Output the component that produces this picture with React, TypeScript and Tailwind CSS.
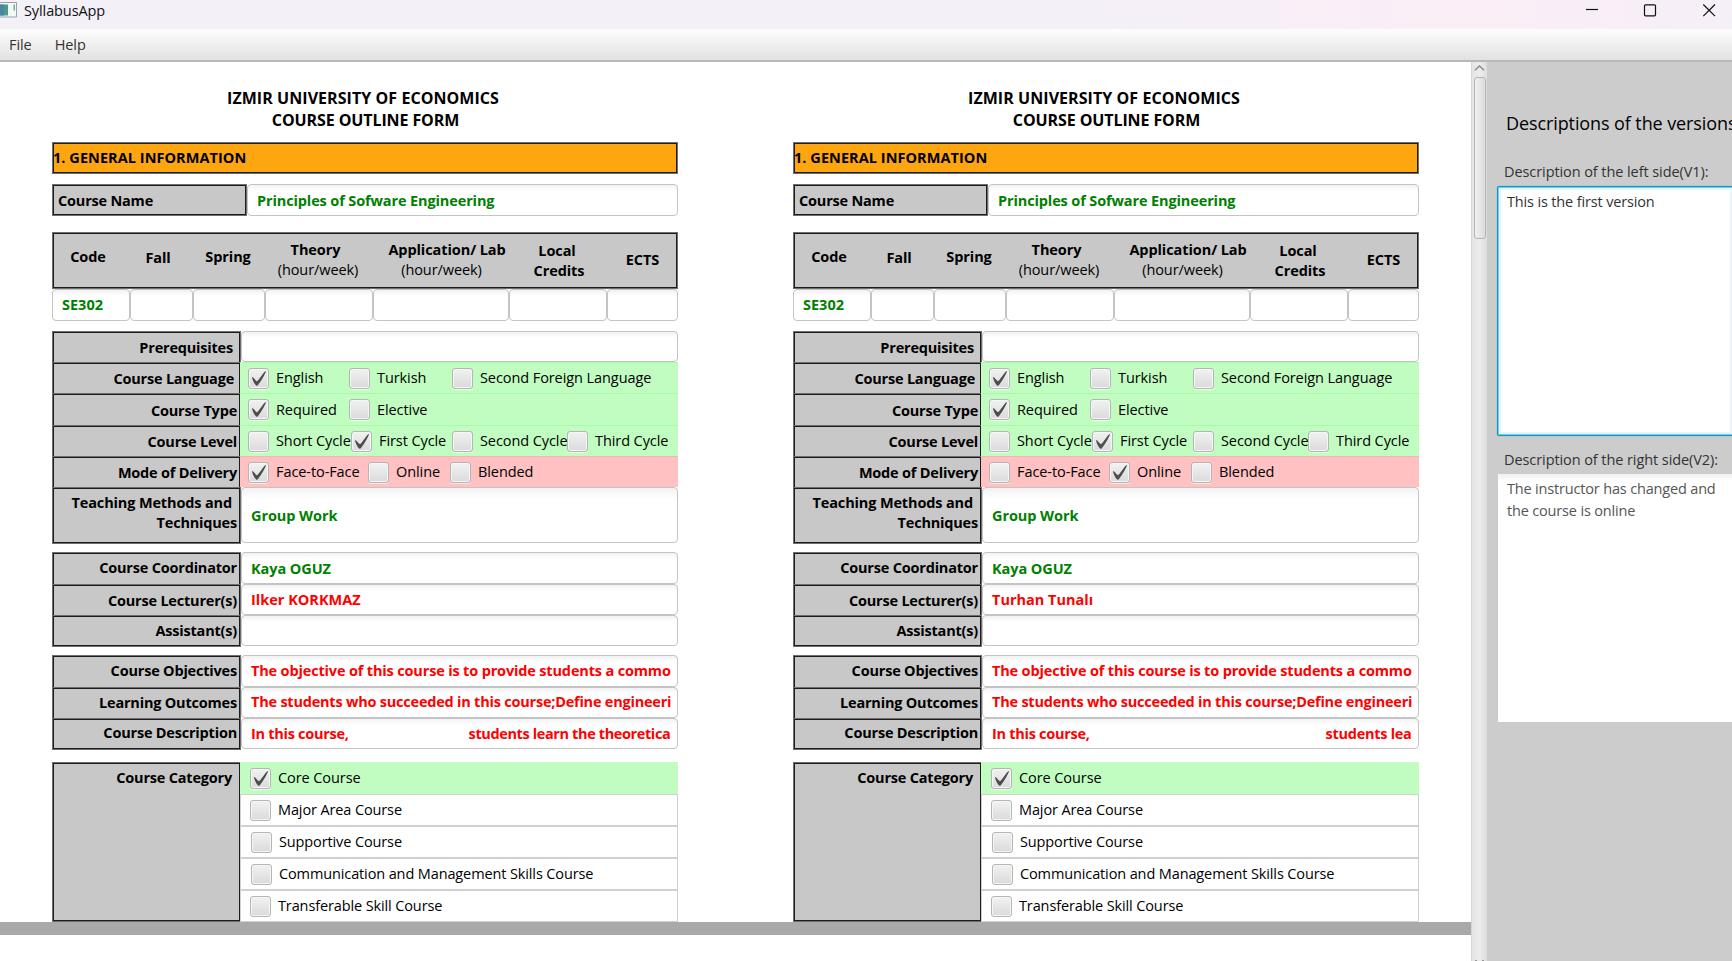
import type { ReactNode } from "react";

type Option = { label: string; checked?: boolean; width: string };

function CheckBox({ checked }: { checked?: boolean }) {
  return (
    <span className="flex h-[21px] w-[21px] shrink-0 items-center justify-center rounded-[3px] border border-[#b5b5b5] bg-linear-to-b from-[#f2f2f2] to-[#dadada] shadow-[inset_0_0_0_1px_#f6f6f6,0_1px_0_rgba(255,255,255,0.6)]">
      {checked && (
        <svg width="14" height="15" viewBox="-0.5 -1 16.6 17.3" preserveAspectRatio="none" fill="#4d4d4d">
          <path d="M-0.25,6.083c0.843-0.758,4.583,4.833,5.75,4.833S14.5-1.5,15.917-0.917c1.292,0.532-8.75,17.083-10.5,17.083C3,16.167-1.094,6.841-0.25,6.083z" />
        </svg>
      )}
    </span>
  );
}

function Check({ option }: { option: Option }) {
  return (
    <div className={`flex shrink-0 items-center gap-[7px] whitespace-nowrap ${option.width}`}>
      <CheckBox checked={option.checked} />
      <span>{option.label}</span>
    </div>
  );
}

const EDGE = "border border-[#6e6e6e] shadow-[inset_0_0_0_1px_#1c1c1c]";

function Label({ children, pad = "pr-[3px]" }: { children: ReactNode; pad?: string }) {
  return (
    <div className={`-mb-[2px] flex w-[189px] shrink-0 items-center justify-end bg-[#c8c8c8] text-right font-bold tracking-[-0.2px] group-last:-mb-px ${EDGE} ${pad}`}>
      <span>{children}</span>
    </div>
  );
}

function Field({ children, color, pad = "" }: { children?: ReactNode; color?: string; pad?: string }) {
  return (
    <div className={`flex flex-1 items-center overflow-hidden rounded-[4px] border border-[#c4c4c4] bg-linear-to-b from-[#f2f2f2] via-white via-20% to-white pl-[9px] font-bold ${pad} ${color ?? ""}`}>
      <span className="whitespace-pre">{children}</span>
    </div>
  );
}

function Row({ label, pad, height, children }: { label: ReactNode; pad?: string; height: string; children: ReactNode }) {
  return (
    <div className={`group flex ${height}`}>
      <Label pad={pad}>{label}</Label>
      {children}
    </div>
  );
}

function Options({ options, tone }: { options: Option[]; tone: string }) {
  return (
    <div className={`-ml-px flex flex-1 items-center border-t pl-2 ${tone}`}>
      {options.map((o) => (
        <Check key={o.label} option={o} />
      ))}
    </div>
  );
}

const GREEN = "border-[#a4fca4] bg-[#c1fdc1]";
const RED = "border-[#f4b4b4] bg-[#ffc1c1]";
const OK = "text-[#008000]";
const DIFF = "text-[#ff0000]";

type Syllabus = {
  lecturer: string;
  faceToFace: boolean;
  description: string;
  tail: string;
  gap: string;
};

const codeCells = ["w-[78px]", "w-[63px]", "w-[72px]", "w-[108px]", "w-[136px]", "w-[98px]", "w-[71px]"];

const categories = [
  { label: "Major Area Course", pad: "pl-[9px]" },
  { label: "Supportive Course", pad: "pl-[10px]" },
  { label: "Communication and Management Skills Course", pad: "pl-[10px]" },
  { label: "Transferable Skill Course", pad: "pl-[9px]" },
];

function HeadCell({ width, pad, top, sub, subPad = "" }: { width: string; pad: string; top: ReactNode; sub?: string; subPad?: string }) {
  return (
    <div className={`shrink-0 text-center font-bold leading-5 whitespace-nowrap ${width} ${pad}`}>
      {top}
      {sub && <div className={`font-normal ${subPad}`}>{sub}</div>}
    </div>
  );
}

function Outline({ data }: { data: Syllabus }) {
  return (
    <div className="w-[626px] shrink-0">
      <div className="h-20 pt-[25px] text-center text-base font-bold leading-[22px]">
        <div className="pr-[4px] tracking-[0.06px]">IZMIR UNIVERSITY OF ECONOMICS</div>
        <div className="pl-px tracking-[-0.1px]">COURSE OUTLINE FORM</div>
      </div>
      <div className={`flex h-8 items-center bg-[#fea60f] font-bold tracking-[0.05px] ${EDGE}`}>1. GENERAL INFORMATION</div>

      <div className="mt-[10px] flex h-8">
        <div className={`flex w-[195px] items-center bg-[#c8c8c8] pt-px pl-[5px] font-bold tracking-[-0.2px] ${EDGE}`}>Course Name</div>
        <Field color={OK} pad="pt-px tracking-[-0.12px]">Principles of Sofware Engineering</Field>
      </div>

      <div className={`mt-4 flex h-[57px] bg-[#c8c8c8] ${EDGE}`}>
        <HeadCell width="w-[70px]" pad="pt-[14px]" top="Code" />
        <HeadCell width="w-[70px]" pad="pt-[15px]" top="Fall" />
        <HeadCell width="w-[70px]" pad="pt-[14px]" top="Spring" />
        <HeadCell width="w-[107px]" pad="pt-[7px] pr-[2px]" top="Theory" sub="(hour/week)" subPad="pl-[5px]" />
        <HeadCell width="w-[143px]" pad="pt-[7px] pl-[11px]" top="Application/ Lab" sub="(hour/week)" subPad="pr-[11px]" />
        <HeadCell width="w-[91px]" pad="pt-[8px]" top={<><div className="pr-[3px]">Local</div><div className="pl-px">Credits</div></>} />
        <HeadCell width="w-[73px]" pad="pt-[17px] pl-[4px]" top="ECTS" />
      </div>
      <div className="flex h-8 bg-white">
        {codeCells.map((w, i) => (
          <div key={w} className={`flex shrink-0 ${w}`}>
            <Field color={OK} pad="tracking-normal">{i === 0 ? "SE302" : ""}</Field>
          </div>
        ))}
      </div>

      <div className="mt-[10px]">
        <Row label="Prerequisites" pad="pr-[7px]" height="h-[31px]">
          <Field />
        </Row>
        <Row label="Course Language" pad="pr-[6px]" height="h-[31px]">
          <Options
            tone={GREEN}
            options={[
              { label: "English", checked: true, width: "w-[101px]" },
              { label: "Turkish", width: "w-[103px]" },
              { label: "Second Foreign Language", width: "w-[200px]" },
            ]}
          />
        </Row>
        <Row label="Course Type" pad="pr-[3px] pt-px" height="h-8">
          <Options
            tone={GREEN}
            options={[
              { label: "Required", checked: true, width: "w-[101px]" },
              { label: "Elective", width: "w-[102px]" },
            ]}
          />
        </Row>
        <Row label="Course Level" height="h-[31px]">
          <Options
            tone={GREEN}
            options={[
              { label: "Short Cycle", width: "w-[103px]" },
              { label: "First Cycle", checked: true, width: "w-[101px]" },
              { label: "Second Cycle", width: "w-[115px]" },
              { label: "Third Cycle", width: "w-[104px]" },
            ]}
          />
        </Row>
        <Row label="Mode of Delivery" height="h-[31px]">
          <Options
            tone={RED}
            options={[
              { label: "Face-to-Face", checked: data.faceToFace, width: "w-[120px]" },
              { label: "Online", checked: !data.faceToFace, width: "w-[82px]" },
              { label: "Blended", width: "w-[100px]" },
            ]}
          />
        </Row>
        <Row
          height="h-[56px]"
          pad="pr-[3px] pb-[6px] leading-5"
          label={<><span className="block pr-[5px] tracking-[-0.14px]">Teaching Methods and</span>Techniques</>}
        >
          <Field color={OK} pad="pt-[2px]">Group Work</Field>
        </Row>
      </div>

      <div className="mt-[9px]">
        <Row label="Course Coordinator" pad="pr-[3px] pb-[2px]" height="h-8">
          <Field color={OK} pad="pt-px">Kaya OGUZ</Field>
        </Row>
        <Row label="Course Lecturer(s)" height="h-[31px]">
          <Field color={DIFF} pad="tracking-normal">{data.lecturer}</Field>
        </Row>
        <Row label="Assistant(s)" height="h-[31px]">
          <Field />
        </Row>
      </div>

      <div className="mt-[9px]">
        <Row label="Course Objectives" pad="pr-[3px] pb-[2px]" height="h-8">
          <Field color={DIFF} pad="tracking-[-0.16px]">The objective of this course is to provide students a commo</Field>
        </Row>
        <Row label="Learning Outcomes" pad="pr-[3px] pb-[2px]" height="h-[31px]">
          <Field color={DIFF} pad="pb-[2px] tracking-[-0.22px]">The students who succeeded in this course;Define engineeri</Field>
        </Row>
        <Row label="Course Description" pad="pr-[3px] pb-[2px]" height="h-[31px]">
          <Field color={DIFF} pad="tracking-[-0.28px]">
            {data.description}
            <span className={data.gap}>{data.tail}</span>
          </Field>
        </Row>
      </div>

      <div className="mt-[13px] flex h-40">
        <div className={`w-[189px] shrink-0 bg-[#c8c8c8] pt-1 pr-[8px] text-right font-bold tracking-[-0.2px] ${EDGE}`}>Course Category</div>
        <div className="-ml-px flex flex-1 flex-col">
          <div className="flex h-8 items-center bg-[#c1fdc1] pl-[10px]">
            <Check option={{ label: "Core Course", checked: true, width: "w-[200px]" }} />
          </div>
          {categories.map((c) => (
            <div key={c.label} className={`flex h-8 items-center border border-[#d0d0d0] bg-white tracking-[-0.12px] ${c.pad}`}>
              <Check option={{ label: c.label, width: "w-[380px]" }} />
            </div>
          ))}
        </div>
      </div>
    </div>
  );
}

function TitleBar() {
  return (
    <div className="flex h-[29px] shrink-0 bg-linear-to-r from-[#f3f0f8] from-60% via-[#fbeef7] via-85% to-[#f5eff8]">
      <svg className="mt-[2px]" width="17" height="16" viewBox="0 0 17 16">
        <path d="M-2 0.5 H16.5 V15 H-2 Z" fill="#f4f7f8" stroke="#9aa0a8" />
        <rect x="0" y="2.5" width="8" height="11" fill="#4a9a8c" />
        <rect x="0" y="2.5" width="4" height="11" fill="#4d86a0" />
        <rect x="13.5" y="2.5" width="1.5" height="6" fill="#6cb48c" />
      </svg>
      <div className="ml-[7px] text-[14.5px] leading-[22px] tracking-[-0.1px] text-[#111]">SyllabusApp</div>
      <svg className="mt-1 mr-[16px] ml-auto" width="130" height="14" viewBox="0 0 130 14" fill="none" stroke="#111" strokeWidth="1.2">
        <path d="M0 5.5 H12" />
        <rect x="58.5" y="0.8" width="11" height="11" rx="1" />
        <path d="M117.3 0.5 L129 12.2 M129 0.5 L117.3 12.2" />
      </svg>
    </div>
  );
}

export default function App() {
  return (
    <div className="flex h-[961px] w-[1732px] flex-col overflow-hidden bg-white font-['Open_Sans','Noto_Sans',sans-serif] text-[14.5px] tracking-[-0.08px] text-black">
      <TitleBar />
      <div className="flex h-[33px] shrink-0 items-center gap-[23px] border-b-2 border-[#b8b8b8] bg-linear-to-b from-[#fdfdfd] to-[#e2e2e2] pl-[9px] text-[#333]">
        <span>File</span>
        <span>Help</span>
      </div>
      <div className="flex min-h-0 flex-1">
        <div className="w-[1471px] shrink-0">
          <div className="flex h-[860px] gap-[115px] pl-[52px]">
            <Outline data={{ lecturer: "Ilker KORKMAZ", faceToFace: true, description: "In this course,", tail: "students learn the theoretica", gap: "ml-[120px] tracking-[-0.38px]" }} />
            <Outline data={{ lecturer: "Turhan Tunalı", faceToFace: false, description: "In this course,", tail: "students lea", gap: "ml-[236px]" }} />
          </div>
          <div className="h-[13px] bg-[#a9a9a9]" />
        </div>
        <div className="flex w-4 shrink-0 flex-col items-center overflow-hidden border-l border-[#d6d6d6] bg-linear-to-r from-[#e4e4e4] via-[#ececec] to-[#dedede]">
          <svg className="mt-[3px] shrink-0" width="11" height="6" viewBox="0 0 11 6" fill="none" stroke="#8a8a8a" strokeWidth="1.5">
            <path d="M1 5.3 L5.5 1 L10 5.3" />
          </svg>
          <div className="mt-[6px] h-[162px] w-3 shrink-0 rounded-[3px] border border-[#b4b4b4] bg-linear-to-r from-[#f0f0f0] to-[#dcdcdc]" />
          <div className="mt-auto flex w-[9px] shrink-0 justify-between">
            <span className="h-px w-0.5 bg-[#999]" />
            <span className="h-px w-0.5 bg-[#999]" />
          </div>
        </div>
        <div className="flex flex-1 flex-col overflow-hidden bg-[#cccccc]">
          <div className="mt-[47px] ml-[19px] h-7 text-[18px] leading-7 tracking-[-0.1px] whitespace-nowrap">Descriptions of the versions</div>
          <div className="mt-[25px] ml-[17px] h-[22px] leading-5 whitespace-nowrap text-[#333]">Description of the left side(V1):</div>
          <div className="mt-[2px] ml-[10px] h-[250px] w-[237px] shrink-0 rounded-[2px] border border-[#0a9bce] bg-white pt-[4px] pl-[9px] leading-[22px] tracking-[-0.15px] text-[#333] shadow-[inset_0_0_0_1px_#7cc8e6,inset_0_0_0_3px_#e8f4fb,0_0_1px_#0a9bce]">
            This is the first version
          </div>
          <div className="mt-[14px] ml-[17px] h-[24px] leading-5 whitespace-nowrap text-[#333]">Description of the right side(V2):</div>
          <div className="ml-[11px] h-[248px] w-[250px] shrink-0 bg-white bg-linear-to-b from-[#f0f0f0] via-white via-3% to-white pt-[4px] pl-[9px] leading-[22px] tracking-[-0.17px] text-[#555]">
            The instructor has changed and
            <br />
            the course is online
          </div>
        </div>
      </div>
    </div>
  );
}
